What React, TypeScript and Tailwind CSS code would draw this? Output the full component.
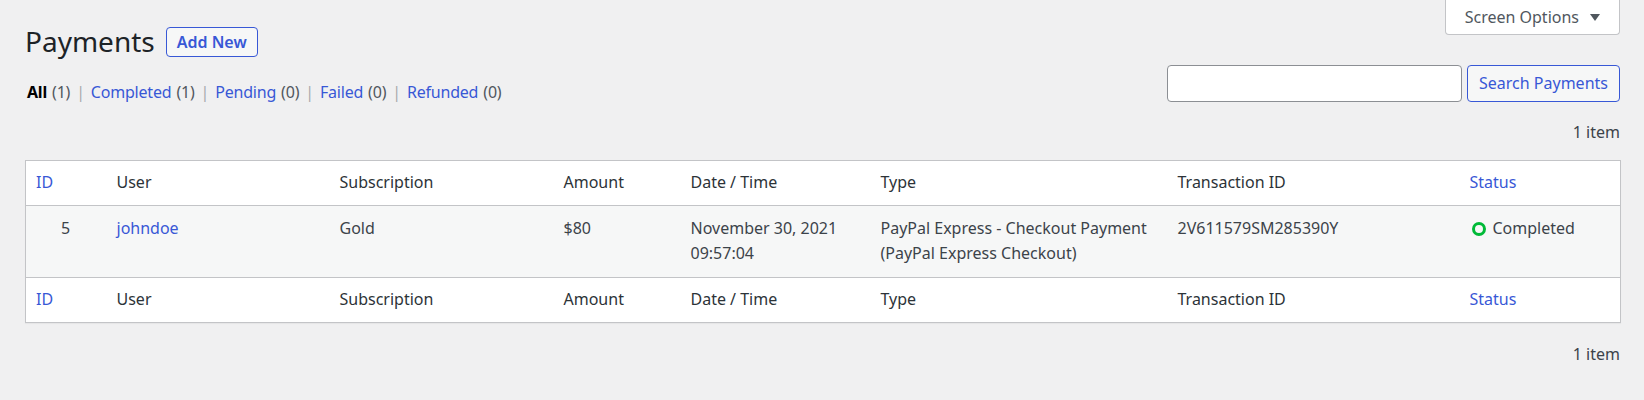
const LINK = 'text-[#3858d6]';

const filters = [
  { label: 'All', count: 1, current: true },
  { label: 'Completed', count: 1 },
  { label: 'Pending', count: 0 },
  { label: 'Failed', count: 0 },
  { label: 'Refunded', count: 0 },
];

const columns = [
  { label: 'ID', sortable: true, width: 'w-[81px]' },
  { label: 'User', width: 'w-[223px]' },
  { label: 'Subscription', width: 'w-[224px]' },
  { label: 'Amount', width: 'w-[127px]' },
  { label: 'Date / Time', width: 'w-[190px]' },
  { label: 'Type', width: 'w-[297px]' },
  { label: 'Transaction ID', width: 'w-[292px]' },
  { label: 'Status', sortable: true, width: 'w-[161px]' },
];

function HeadRow({ foot }: { foot?: boolean }) {
  return (
    <tr className={foot ? 'border-t border-[#c3c4c7]' : 'border-b border-[#c3c4c7]'}>
      {columns.map((c) => (
        <th
          key={c.label}
          className={`px-[10px] py-[9.5px] text-left font-normal ${c.sortable ? LINK : 'text-[#2c3338]'}`}
        >
          {c.label}
        </th>
      ))}
    </tr>
  );
}

export default function App() {
  return (
    <div className="min-h-[400px] bg-[#f0f0f1] pl-[25px] pr-[24px] font-['Noto_Sans',sans-serif] text-[16px] leading-[25px] text-[#3c434a]">
      {/* title + screen options */}
      <div className="flex items-start justify-between">
        <div className="flex items-center gap-[11px] pt-[23px]">
          <h1 className="text-[28px] leading-[37px] font-normal text-[#1d2327]">Payments</h1>
          <button className="h-[30px] rounded-[4px] border border-[#3858d6] bg-[#f6f7f7] px-[10px] text-[16px] font-semibold leading-[28px] text-[#3858d6]">
            Add New
          </button>
        </div>
        <button className="flex h-[35px] items-center gap-[11px] rounded-b-[4px] border border-t-0 border-[#c3c4c7] bg-white pl-[19px] pr-[19px] text-[16px] text-[#50575e]">
          Screen Options
          <svg width="10" height="7" viewBox="0 0 10 7" className="fill-[#50575e]">
            <path d="M0 0h10L5 7z" />
          </svg>
        </button>
      </div>

      {/* filters + search */}
      <div className="flex items-start justify-between">
        <ul className="flex pt-[19.5px] pl-[2px] tracking-[-0.2px]">
          {filters.map((f, i) => (
            <li key={f.label} className="flex">
              <span className={f.current ? 'font-bold text-black' : LINK}>{f.label}</span>
              <span className="ml-[5px] text-[#50575e]">({f.count})</span>
              {i < filters.length - 1 && <span className="mx-[6px] text-[#a7aaad]">|</span>}
            </li>
          ))}
        </ul>
        <div className="mt-[5px] flex gap-[5px]">
          <input className="h-[37px] w-[295px] rounded-[4px] border border-[#8c8f94] bg-white px-2" />
          <button className="h-[37px] w-[153px] rounded-[4px] border border-[#3858d6] bg-[#f6f7f7] text-[16px] text-[#3858d6]">
            Search Payments
          </button>
        </div>
      </div>

      <div className="mt-[15px] text-right text-[#3c434a]">1 item</div>

      <table className="mt-[15px] w-full table-fixed border border-[#c3c4c7] bg-white shadow-[0_1px_1px_rgba(0,0,0,0.04)]">
        <colgroup>
          {columns.map((c) => (
            <col key={c.label} className={c.width} />
          ))}
        </colgroup>
        <thead>
          <HeadRow />
        </thead>
        <tbody>
          <tr className="bg-[#f6f7f7] align-top">
            <td className="py-[10.5px] pl-[35px]">5</td>
            <td className={`px-[10px] py-[10.5px] ${LINK}`}>johndoe</td>
            <td className="px-[10px] py-[10.5px]">Gold</td>
            <td className="px-[10px] py-[10.5px]">$80</td>
            <td className="px-[10px] py-[10.5px]">
              November 30, 2021
              <br />
              09:57:04
            </td>
            <td className="px-[10px] py-[10.5px]">
              PayPal Express - Checkout Payment
              <br />
              (PayPal Express Checkout)
            </td>
            <td className="px-[10px] py-[10.5px]">2V611579SM285390Y</td>
            <td className="px-[10px] py-[10.5px]">
              <span className="flex items-center gap-[7px] pl-[2px]">
                <span className="h-[14px] w-[14px] rounded-full border-[3px] border-[#00ba37]" />
                Completed
              </span>
            </td>
          </tr>
        </tbody>
        <tfoot>
          <HeadRow foot />
        </tfoot>
      </table>

      <div className="mt-[19px] text-right">1 item</div>
    </div>
  );
}
